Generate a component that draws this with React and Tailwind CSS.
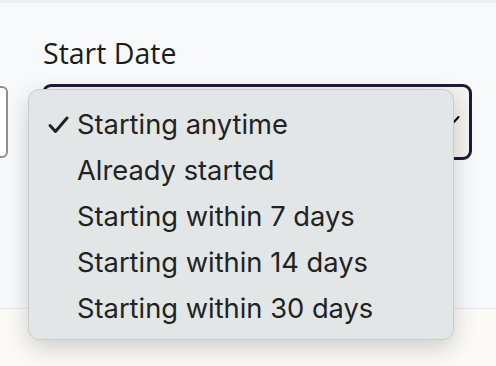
import React from "react";

const items = [
  "Starting anytime",
  "Already started",
  "Starting within 7 days",
  "Starting within 14 days",
  "Starting within 30 days",
];

export default function App() {
  return (
    <div className="relative w-[496px] h-[366px] overflow-hidden bg-[#fbfaf7]">
      <div className="h-[309px] bg-[#f8f9fb] border-t-[3px] border-[#eceef1] border-b border-b-[#e8eaee]">
        <div className="pl-[43px] pt-[32px]">
          <div className="text-[28.5px] leading-[36px] text-[#1c1c1c] font-['Open_Sans',sans-serif]">
            Start Date
          </div>
        </div>
        <div className="flex items-start mt-[13px]">
          <div className="w-[10px] h-[72px] -ml-[2px] mt-[2px] rounded-r-[6px] border-2 border-[#8e8e93] bg-white" />
          <div className="ml-[34px] w-[430px] h-[76px] rounded-[9px] border-[3px] border-[#1e1b3a] bg-[#f4f3ef] flex items-center justify-end pr-[9px]">
            <svg width="14" height="10" viewBox="0 0 14 10" className="text-black -mt-[4px]">
              <path d="M1.5 2 L7 8 L12.5 2" fill="none" stroke="currentColor" strokeWidth="2" strokeLinecap="round" />
            </svg>
          </div>
        </div>
      </div>
      <div className="absolute left-[28px] top-[89px] w-[426px] h-[251px] rounded-[11px] bg-[#e3e6e7] border border-[#c9cbcc] shadow-[0_8px_24px_rgba(0,0,0,0.18)] pt-[12px] font-['Inter',sans-serif] text-[#222222]">
        {items.map((t, i) => (
          <div key={t} className="flex items-center h-[46px] text-[27.3px]">
            <div className="w-[48px] flex justify-start pl-[19px]">
              {i === 0 && (
                <svg width="21" height="18" viewBox="0 0 21 18">
                  <path d="M2 9.5 L7.5 15.5 L19 2" fill="none" stroke="#222" strokeWidth="3" strokeLinecap="round" strokeLinejoin="round" />
                </svg>
              )}
            </div>
            <span>{t}</span>
          </div>
        ))}
      </div>
    </div>
  );
}
